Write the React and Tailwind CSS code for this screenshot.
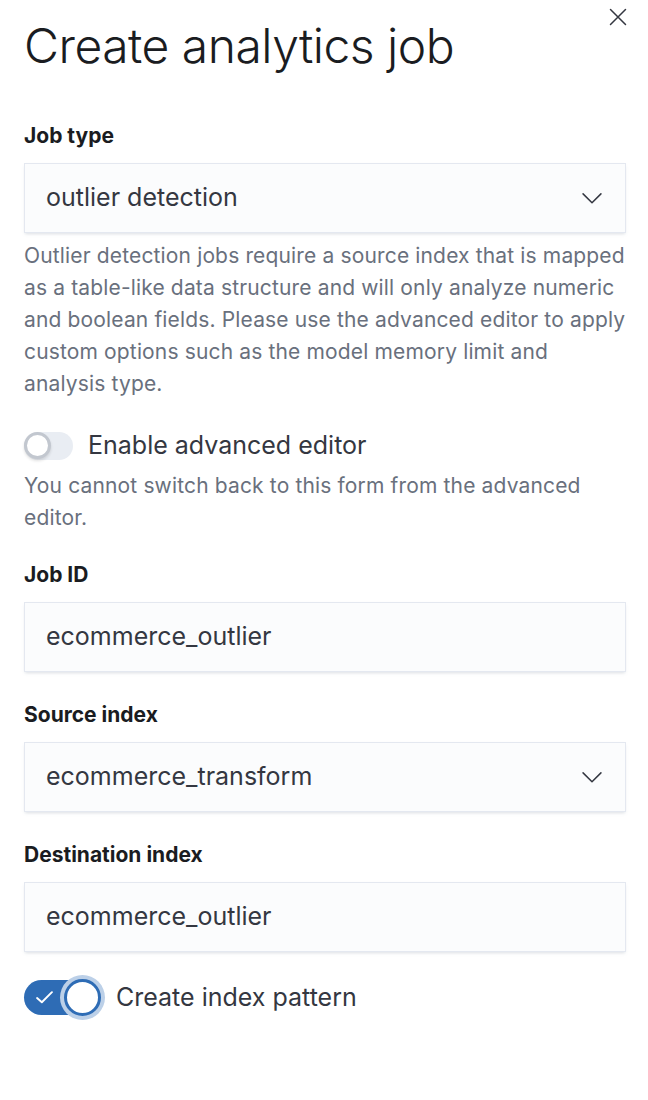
import React from 'react';

const font = { fontFamily: 'Inter, "Noto Sans", sans-serif' };

const Chevron = () => (
  <svg width="22" height="22" viewBox="0 0 16 16" fill="none" className="text-[#343741]">
    <path d="M1.5 5l6.5 6.5L14.5 5" stroke="currentColor" strokeWidth="1.1" strokeLinecap="round" strokeLinejoin="round" />
  </svg>
);

const Field = ({ label, value, select }) => (
  <div className="flex flex-col">
    <div className="text-[21px] leading-[28px] font-bold text-[#1a1c21] mb-[13px]">{label}</div>
    <div className="h-[70px] flex items-center justify-between pl-[21px] pr-[22px] bg-[#fbfcfd] border border-[#e4e8f0] shadow-[0_2px_3px_-1px_rgba(152,162,179,0.35)]">
      <span className="text-[25px] text-[#343741]">{value}</span>
      {select && <Chevron />}
    </div>
  </div>
);

const Help = ({ children }) => (
  <p className="text-[21px] leading-[32px] tracking-[0.15px] text-[#69707d]">{children}</p>
);

export default function App() {
  return (
    <div style={font} className="w-[648px] h-[1100px] bg-white relative pl-[24px] pr-[22px] pt-[18px]">
      <button className="absolute right-[21px] top-[8px] text-[#343741]">
        <svg width="18" height="18" viewBox="0 0 18 18" fill="none">
          <path d="M1.5 1.5l15 15M16.5 1.5l-15 15" stroke="currentColor" strokeWidth="1.5" strokeLinecap="round" />
        </svg>
      </button>

      <h1 className="text-[48px] leading-[56px] font-light text-[#1a1c21] tracking-[-0.5px]">Create analytics job</h1>

      <div className="mt-[48px]">
        <Field label="Job type" value="outlier detection" select />
        <div className="mt-[7px]">
          <Help>
            Outlier detection jobs require a source index that is mapped as a table-like data structure and will only analyze numeric and boolean fields. Please use the advanced editor to apply custom options such as the model memory limit and analysis type.
          </Help>
        </div>
      </div>

      <div className="mt-[27px]">
        <div className="flex items-center gap-[15px]">
          <div className="w-[49px] h-[28px] rounded-full bg-[#e9edf3] flex items-center">
            <div className="w-[27px] h-[27px] rounded-full bg-white border-[3px] border-[#c2c7cf] shadow-[0_2px_3px_rgba(0,0,0,0.12)]" />
          </div>
          <span className="text-[25px] text-[#343741]">Enable advanced editor</span>
        </div>
        <div className="mt-[5px]">
          <Help>You cannot switch back to this form from the advanced editor.</Help>
        </div>
      </div>

      <div className="mt-[27px] flex flex-col gap-[29px]">
        <Field label="Job ID" value="ecommerce_outlier" />
        <Field label="Source index" value="ecommerce_transform" select />
        <Field label="Destination index" value="ecommerce_outlier" />
      </div>

      <div className="mt-[27px] flex items-center gap-[15px]">
        <div className="w-[77px] h-[35px] rounded-full bg-[#2e6cb5] flex items-center justify-between pl-[12px]">
          <svg width="17" height="13" viewBox="0 0 16 12" fill="none">
            <path d="M1 6.5l4.5 4L15 1" stroke="white" strokeWidth="1.8" strokeLinecap="round" strokeLinejoin="round" />
          </svg>
          <div className="w-[37px] h-[37px] rounded-full bg-white border-[3px] border-[#2e6cb5] ring-[4px] ring-[#bcd0e8]" />
        </div>
        <span className="text-[25px] text-[#343741]">Create index pattern</span>
      </div>
    </div>
  );
}
